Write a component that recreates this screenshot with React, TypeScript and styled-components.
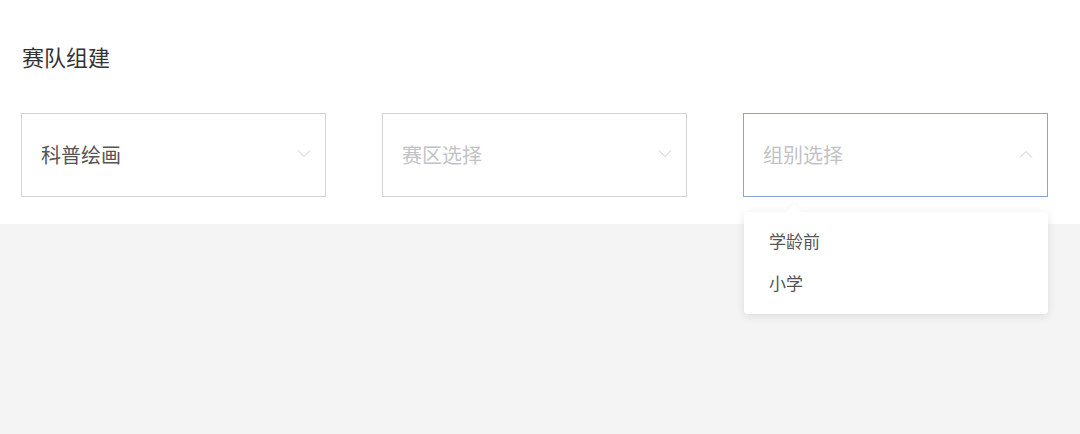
import React from "react";
import styled, { createGlobalStyle } from "styled-components";

const GlobalStyle = createGlobalStyle`
  html, body {
    margin: 0;
    padding: 0;
    background: #f4f4f5;
    font-family: "Noto Sans CJK SC", "Noto Sans", sans-serif;
  }
`;

const Page = styled.div`
  width: 1080px;
  height: 434px;
  background: #f4f4f5;
`;

const Panel = styled.div`
  background: #ffffff;
  height: 224px;
  box-sizing: border-box;
  padding: 40px 32px 0 21px;
`;

const Title = styled.div`
  font-size: 22px;
  font-weight: 400;
  line-height: 32px;
  color: #333333;
  padding-left: 1px;
`;

const Row = styled.div`
  display: flex;
  gap: 56px;
  margin-top: 41px;
`;

const SelectBox = styled.div<{ $focused?: boolean }>`
  position: relative;
  width: 305px;
  height: 84px;
  box-sizing: border-box;
  border: 1px solid ${(p) => (p.$focused ? "#86a5d3" : "#d3d3d6")};
  display: flex;
  align-items: center;
  justify-content: space-between;
  padding: 0 14px 2px 19px;
  background: #fff;
`;

const Value = styled.span<{ $placeholder?: boolean }>`
  font-size: 20px;
  color: ${(p) => (p.$placeholder ? "#c2c2c6" : "#555555")};
`;

const Menu = styled.div`
  position: absolute;
  top: 98px;
  left: 0;
  width: 304px;
  background: #fff;
  border-radius: 4px;
  box-shadow: 0 2px 10px rgba(0, 0, 0, 0.1);
  padding: 8px 0 10px;
  box-sizing: border-box;
  z-index: 2;

  &::before {
    content: "";
    position: absolute;
    top: -6px;
    left: 45px;
    width: 10px;
    height: 10px;
    background: #fff;
    transform: rotate(45deg);
    box-shadow: -2px -2px 4px rgba(0, 0, 0, 0.03);
  }
`;

const MenuItem = styled.div`
  position: relative;
  font-size: 17px;
  color: #555555;
  height: 42px;
  line-height: 42px;
  padding-left: 25px;
`;

const Chevron = ({ up }: { up?: boolean }) => (
  <svg width="14" height="8" viewBox="0 0 14 8" fill="none">
    <path
      d={up ? "M1 7.5L7 1.5L13 7.5" : "M1 0.5L7 6.5L13 0.5"}
      stroke="#c8c8cc"
      strokeWidth="1"
    />
  </svg>
);

export default function App() {
  return (
    <Page>
      <GlobalStyle />
      <Panel>
        <Title>赛队组建</Title>
        <Row>
          <SelectBox>
            <Value>科普绘画</Value>
            <Chevron />
          </SelectBox>
          <SelectBox>
            <Value $placeholder>赛区选择</Value>
            <Chevron />
          </SelectBox>
          <SelectBox $focused>
            <Value $placeholder>组别选择</Value>
            <Chevron up />
            <Menu>
              <MenuItem>学龄前</MenuItem>
              <MenuItem>小学</MenuItem>
            </Menu>
          </SelectBox>
        </Row>
      </Panel>
    </Page>
  );
}
